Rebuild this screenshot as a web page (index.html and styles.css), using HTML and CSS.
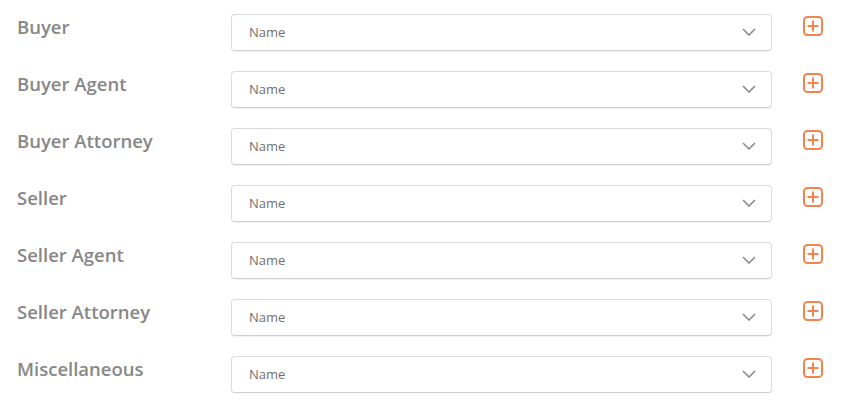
FILE: index.html
```html
<!DOCTYPE html>
<html>
<head>
<meta charset="utf-8">
<link rel="stylesheet" href="styles.css">
</head>
<body>
<div class="form">
  <div class="row">
    <div class="label">Buyer</div>
    <div class="select"><span class="value">Name</span><svg class="chev" width="14" height="8" viewBox="0 0 14 8"><path d="M1 1l6 6 6-6" fill="none" stroke="#8a8a8a" stroke-width="1.6"/></svg></div>
    <svg class="add" width="20" height="20" viewBox="0 0 20 20"><rect x="1" y="1" width="18" height="18" rx="3.5" fill="none" stroke="#f2844d" stroke-width="2"/><path d="M10 4.5v11M4.5 10h11" stroke="#f2844d" stroke-width="2"/></svg>
  </div>
  <div class="row">
    <div class="label">Buyer Agent</div>
    <div class="select"><span class="value">Name</span><svg class="chev" width="14" height="8" viewBox="0 0 14 8"><path d="M1 1l6 6 6-6" fill="none" stroke="#8a8a8a" stroke-width="1.6"/></svg></div>
    <svg class="add" width="20" height="20" viewBox="0 0 20 20"><rect x="1" y="1" width="18" height="18" rx="3.5" fill="none" stroke="#f2844d" stroke-width="2"/><path d="M10 4.5v11M4.5 10h11" stroke="#f2844d" stroke-width="2"/></svg>
  </div>
  <div class="row">
    <div class="label">Buyer Attorney</div>
    <div class="select"><span class="value">Name</span><svg class="chev" width="14" height="8" viewBox="0 0 14 8"><path d="M1 1l6 6 6-6" fill="none" stroke="#8a8a8a" stroke-width="1.6"/></svg></div>
    <svg class="add" width="20" height="20" viewBox="0 0 20 20"><rect x="1" y="1" width="18" height="18" rx="3.5" fill="none" stroke="#f2844d" stroke-width="2"/><path d="M10 4.5v11M4.5 10h11" stroke="#f2844d" stroke-width="2"/></svg>
  </div>
  <div class="row">
    <div class="label">Seller</div>
    <div class="select"><span class="value">Name</span><svg class="chev" width="14" height="8" viewBox="0 0 14 8"><path d="M1 1l6 6 6-6" fill="none" stroke="#8a8a8a" stroke-width="1.6"/></svg></div>
    <svg class="add" width="20" height="20" viewBox="0 0 20 20"><rect x="1" y="1" width="18" height="18" rx="3.5" fill="none" stroke="#f2844d" stroke-width="2"/><path d="M10 4.5v11M4.5 10h11" stroke="#f2844d" stroke-width="2"/></svg>
  </div>
  <div class="row">
    <div class="label">Seller Agent</div>
    <div class="select"><span class="value">Name</span><svg class="chev" width="14" height="8" viewBox="0 0 14 8"><path d="M1 1l6 6 6-6" fill="none" stroke="#8a8a8a" stroke-width="1.6"/></svg></div>
    <svg class="add" width="20" height="20" viewBox="0 0 20 20"><rect x="1" y="1" width="18" height="18" rx="3.5" fill="none" stroke="#f2844d" stroke-width="2"/><path d="M10 4.5v11M4.5 10h11" stroke="#f2844d" stroke-width="2"/></svg>
  </div>
  <div class="row">
    <div class="label">Seller Attorney</div>
    <div class="select"><span class="value">Name</span><svg class="chev" width="14" height="8" viewBox="0 0 14 8"><path d="M1 1l6 6 6-6" fill="none" stroke="#8a8a8a" stroke-width="1.6"/></svg></div>
    <svg class="add" width="20" height="20" viewBox="0 0 20 20"><rect x="1" y="1" width="18" height="18" rx="3.5" fill="none" stroke="#f2844d" stroke-width="2"/><path d="M10 4.5v11M4.5 10h11" stroke="#f2844d" stroke-width="2"/></svg>
  </div>
  <div class="row">
    <div class="label">Miscellaneous</div>
    <div class="select"><span class="value">Name</span><svg class="chev" width="14" height="8" viewBox="0 0 14 8"><path d="M1 1l6 6 6-6" fill="none" stroke="#8a8a8a" stroke-width="1.6"/></svg></div>
    <svg class="add" width="20" height="20" viewBox="0 0 20 20"><rect x="1" y="1" width="18" height="18" rx="3.5" fill="none" stroke="#f2844d" stroke-width="2"/><path d="M10 4.5v11M4.5 10h11" stroke="#f2844d" stroke-width="2"/></svg>
  </div>
</div>
</body>
</html>
```
FILE: styles.css
```css
html, body {
  margin: 0;
  padding: 0;
  background: #ffffff;
}
body {
  font-family: "Open Sans", "Liberation Sans", sans-serif;
}
.form {
  display: flex;
  flex-direction: column;
  gap: 20px;
  padding: 14px 0 0 17px;
}
.row {
  display: flex;
  align-items: flex-start;
}
.label {
  width: 214px;
  flex: none;
  font-size: 18.5px;
  font-weight: 600;
  line-height: 26px;
  margin-top: 0;
  color: #878787;
}
.select {
  width: 541px;
  height: 37px;
  box-sizing: border-box;
  flex: none;
  display: flex;
  align-items: center;
  justify-content: space-between;
  padding: 0 15px 1px 17px;
  border: 1px solid #dcdcdc;
  border-bottom-color: #cfcfcf;
  border-radius: 4px;
  box-shadow: 0 1px 1px rgba(0, 0, 0, 0.06);
  background: #fff;
}
.value {
  font-size: 13px;
  color: #707070;
  line-height: 18px;
}
.chev {
  display: block;
}
.add {
  display: block;
  margin: 2px 0 0 31px;
  flex: none;
}
```
